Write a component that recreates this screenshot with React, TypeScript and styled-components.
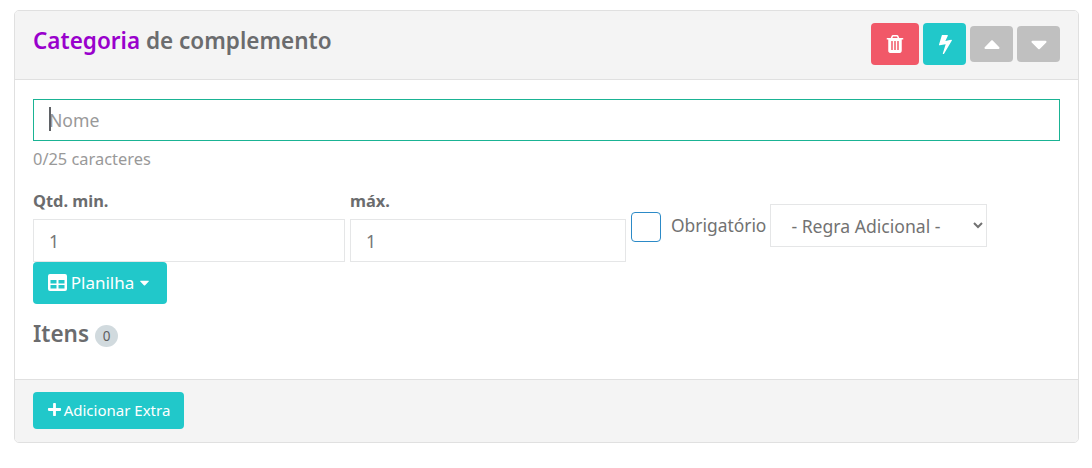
import React from "react";
import styled, { createGlobalStyle } from "styled-components";
import { FaCaretUp, FaCaretDown, FaPlus } from "react-icons/fa";

const Global = createGlobalStyle`
  html, body { margin: 0; padding: 0; background: #fff; }
  body { font-family: "Noto Sans", "Open Sans", sans-serif; color: #6b6c6e; }
  * { box-sizing: border-box; }
`;

const Page = styled.div`
  padding: 10px 13px 25px 14px;
`;

const Panel = styled.section`
  border: 1px solid #e0e0e0;
  border-radius: 5px;
  overflow: hidden;
`;

const Header = styled.header`
  height: 69px;
  background: #f4f4f4;
  border-bottom: 1px solid #e0e0e0;
  padding: 12px 18px 0 18px;
  display: flex;
  justify-content: space-between;
  align-items: flex-start;
`;

const Title = styled.h2`
  margin: 0;
  font-size: 22.5px;
  line-height: 36px;
  font-weight: 600;
  color: #6b6c6e;
`;

const Accent = styled.span`
  color: #9900cc;
`;

const Actions = styled.div`
  display: flex;
  gap: 4px;
  align-items: center;
  height: 42px;
`;

const IconButton = styled.button<{ $bg: string; $w: number; $h: number }>`
  width: ${(p) => p.$w}px;
  height: ${(p) => p.$h}px;
  background: ${(p) => p.$bg};
  border: none;
  border-radius: 4px;
  color: #fff;
  padding: 0;
  display: flex;
  align-items: center;
  justify-content: center;
  font-size: 18px;
`;

const Body = styled.div`
  padding: 19px 18px 0 18px;
  height: 299px;
`;

const NameField = styled.div`
  position: relative;
`;

const NameInput = styled.input`
  display: block;
  width: 100%;
  height: 42px;
  border: 1px solid #1ab394;
  outline: none;
  padding: 0 15px;
  font: 400 17.6px "Noto Sans", sans-serif;
  color: #6b6c6e;
  &::placeholder { color: #999; opacity: 1; }
`;

const Caretbar = styled.span`
  position: absolute;
  left: 16px;
  top: 8px;
  width: 2px;
  height: 24px;
  background: #5f6266;
`;

const Hint = styled.div`
  font-size: 16.4px;
  line-height: 22px;
  margin-top: 7px;
  color: #999;
`;

const FormRow = styled.div`
  display: flex;
  margin-top: 20px;
  align-items: flex-start;
`;

const Field = styled.div<{ $w: number; $mr: number }>`
  width: ${(p) => p.$w}px;
  margin-right: ${(p) => p.$mr}px;
  flex: none;
`;

const Label = styled.label`
  display: block;
  font-size: 16.4px;
  font-weight: 700;
  line-height: 22px;
  margin-bottom: 7px;
`;

const NumberInput = styled.input`
  display: block;
  width: 100%;
  height: 43px;
  border: 1px solid #e5e6e7;
  padding: 0 15px;
  font: 400 17.6px "Noto Sans", sans-serif;
  color: #777;
  outline: none;
`;

const Check = styled.span`
  flex: none;
  width: 30px;
  height: 30px;
  margin-top: 22px;
  margin-right: 10px;
  border: 1px solid #2c8ac7;
  border-radius: 4px;
  background: #fff;
`;

const CheckLabel = styled.span`
  flex: none;
  font-size: 17.4px;
  line-height: 24px;
  margin-top: 23px;
  margin-right: 4px;
  color: #727272;
`;

const Select = styled.select`
  flex: none;
  width: 217px;
  height: 43px;
  margin-top: 14px;
  border: 1px solid #e5e6e7;
  background: #fff;
  padding: 0 16px;
  font: 400 17.6px "Noto Sans", sans-serif;
  color: #727272;
  outline: none;
`;

const TealButton = styled.button<{ $size: number; $h: number; $w: number }>`
  display: flex;
  align-items: center;
  justify-content: center;
  width: ${(p) => p.$w}px;
  height: ${(p) => p.$h}px;
  border: none;
  border-radius: 4px;
  background: #21c8ca;
  color: #fff;
  padding: 0 0 2px;
  font: 400 ${(p) => p.$size}px "Noto Sans", sans-serif;
`;

const Section = styled.div`
  display: flex;
  align-items: center;
  margin-top: 14px;
`;

const SectionTitle = styled.h3`
  margin: 0;
  font-size: 22.5px;
  line-height: 32px;
  font-weight: 600;
`;

const Badge = styled.span`
  width: 23px;
  height: 22px;
  margin-left: 6px;
  margin-top: 3px;
  border-radius: 50%;
  background: #d1dade;
  color: #5e5e5e;
  font-size: 13.5px;
  display: flex;
  align-items: center;
  justify-content: center;
`;

const Footer = styled.footer`
  height: 63px;
  background: #f4f4f4;
  border-top: 1px solid #e0e0e0;
  padding: 12px 18px;
`;

const Spacer = styled.span<{ $w: number }>`
  display: inline-block;
  width: ${(p) => p.$w}px;
`;

const TrashIcon = () => (
  <svg width="18" height="18" viewBox="128 128 1536 1536" preserveAspectRatio="none" fill="currentColor" fillRule="evenodd">
    <path d="M704 1376v-704q0-14-9-23t-23-9h-64q-14 0-23 9t-9 23v704q0 14 9 23t23 9h64q14 0 23-9t9-23zm256 0v-704q0-14-9-23t-23-9h-64q-14 0-23 9t-9 23v704q0 14 9 23t23 9h64q14 0 23-9t9-23zm256 0v-704q0-14-9-23t-23-9h-64q-14 0-23 9t-9 23v704q0 14 9 23t23 9h64q14 0 23-9t9-23zm-544-992h448l-48-117q-7-9-17-11h-317q-10 2-17 11zm928 32v64q0 14-9 23t-23 9h-96v948q0 83-47 143.500t-113 60.500h-832q-66 0-113-58.500t-47-141.500v-952h-96q-14 0-23-9t-9-23v-64q0-14 9-23t23-9h309l70-167q15-37 54-63t79-26h320q40 0 79 26t54 63l70 167h309q14 0 23 9t9 23z" />
  </svg>
);

const BoltIcon = () => (
  <svg width="14" height="19" viewBox="384 128 964 1664" preserveAspectRatio="none" fill="currentColor">
    <path d="M1333 566q18 20 7 44l-540 1157q-13 25-42 25-4 0-14-2-17-5-25.500-19t-4.500-30l197-808-406 101q-4 1-12 1-18 0-31-11-18-15-13-39l201-825q4-14 16-23t28-9h328q19 0 32 12.500t13 29.500q0 8-5 18l-171 463 396-98q8-2 12-2 19 0 34 15z" />
  </svg>
);

const SheetIcon = () => (
  <svg width="19" height="17" viewBox="0 0 19 17" fill="currentColor" fillRule="evenodd">
    <path d="M2 0h15a2 2 0 0 1 2 2v13a2 2 0 0 1-2 2H2a2 2 0 0 1-2-2V2a2 2 0 0 1 2-2zM2.500 6v3.500h6V6zM10.500 6v3.500h6V6zM2.500 11v3.500h6V11zM10.500 11v3.500h6V11z" />
  </svg>
);

export default function App() {
  return (
    <Page>
      <Global />
      <Panel>
        <Header>
          <Title><Accent>Categoria</Accent> de complemento</Title>
          <Actions>
            <IconButton $bg="#f15868" $w={48} $h={42}><TrashIcon /></IconButton>
            <IconButton $bg="#21c8ca" $w={43} $h={42}><BoltIcon /></IconButton>
            <IconButton $bg="#c0c0c0" $w={43} $h={36}><FaCaretUp size={26} /></IconButton>
            <IconButton $bg="#c0c0c0" $w={43} $h={36}><FaCaretDown size={26} /></IconButton>
          </Actions>
        </Header>
        <Body>
          <NameField>
            <NameInput placeholder="Nome" readOnly />
            <Caretbar />
          </NameField>
          <Hint>0/25 caracteres</Hint>
          <FormRow>
            <Field $w={312} $mr={5}>
              <Label>Qtd. min.</Label>
              <NumberInput defaultValue="1" />
            </Field>
            <Field $w={276} $mr={5}>
              <Label>máx.</Label>
              <NumberInput defaultValue="1" />
            </Field>
            <Check />
            <CheckLabel>Obrigatório</CheckLabel>
            <Select defaultValue="r">
              <option value="r">- Regra Adicional -</option>
            </Select>
          </FormRow>
          <TealButton $size={17} $h={42} $w={134}>
            <SheetIcon /><Spacer $w={4} />Planilha<Spacer $w={3} /><FaCaretDown size={15} />
          </TealButton>
          <Section>
            <SectionTitle>Itens</SectionTitle>
            <Badge>0</Badge>
          </Section>
        </Body>
        <Footer>
          <TealButton $size={15} $h={37} $w={151}>
            <FaPlus size={15} /><Spacer $w={2} />Adicionar Extra
          </TealButton>
        </Footer>
      </Panel>
    </Page>
  );
}
